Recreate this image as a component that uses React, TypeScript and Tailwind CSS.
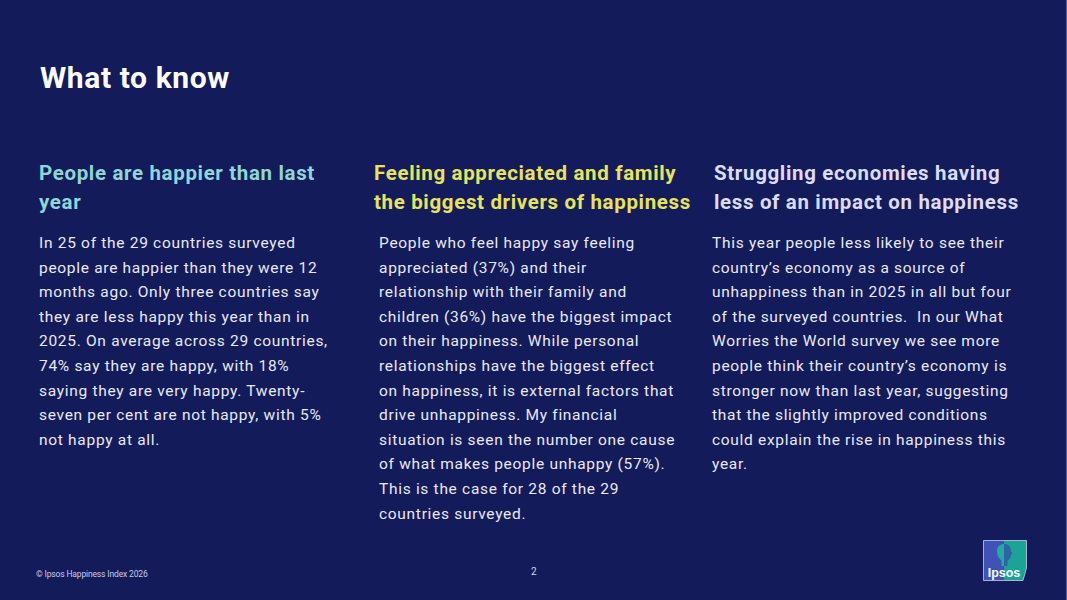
const columns = [
  {
    title: ["People are happier than last", "year"],
    color: "text-[#8fd6d6]",
    wrap: "w-[335px]",
    body: "",
    lines: [
      "In 25 of the 29 countries surveyed",
      "people are happier than they were 12",
      "months ago. Only three countries say",
      "they are less happy this year than in",
      "2025. On average across 29 countries,",
      "74% say they are happy, with 18%",
      "saying they are very happy. Twenty-",
      "seven per cent are not happy, with 5%",
      "not happy at all.",
    ],
  },
  {
    title: ["Feeling appreciated and family", "the biggest drivers of happiness"],
    color: "text-[#e8e35c]",
    wrap: "w-[340px]",
    body: "pl-[5px]",
    lines: [
      "People who feel happy say feeling",
      "appreciated (37%) and their",
      "relationship with their family and",
      "children (36%) have the biggest impact",
      "on their happiness. While personal",
      "relationships have the biggest effect",
      "on happiness, it is external factors that",
      "drive unhappiness. My financial",
      "situation is seen the number one cause",
      "of what makes people unhappy (57%).",
      "This is the case for 28 of the 29",
      "countries surveyed.",
    ],
  },
  {
    title: ["Struggling economies having", "less of an impact on happiness"],
    color: "text-[#dcdcf6]",
    wrap: "flex-1",
    body: "-ml-[2px]",
    lines: [
      "This year people less likely to see their",
      "country’s economy as a source of",
      "unhappiness than in 2025 in all but four",
      "of the surveyed countries.\u00a0 In our What",
      "Worries the World survey we see more",
      "people think their country’s economy is",
      "stronger now than last year, suggesting",
      "that the slightly improved conditions",
      "could explain the rise in happiness this",
      "year.",
    ],
  },
];

const IpsosLogo = () => (
  <svg width="44" height="41" viewBox="0 0 44 41">
    <defs>
      <clipPath id="box">
        <path d="M0.5 0.5 H43.5 V28 L40 40.5 H0.5 Z" />
      </clipPath>
    </defs>
    <g clipPath="url(#box)">
      <rect x="0" y="0" width="21" height="41" fill="#3f52b5" />
      <rect x="21" y="0" width="23" height="41" fill="#1ba396" />
      {/* head silhouette, left part */}
      <path
        d="M21 4 C16 4 13.5 8 14 12.5 C14.5 16.5 16.5 19 18.5 20.5 L18.5 26 L21 26 Z"
        fill="#24ab9f"
      />
      {/* head silhouette, right part */}
      <path
        d="M21 4 C25.5 4 28 7 28 11 L29.5 13.5 L28 14.5 C28 17.5 26.5 19.5 24.5 20.5 L24.5 26 L21 26 Z"
        fill="#2f62a6"
      />
    </g>
    <path
      d="M0.5 0.5 H43.5 V28 L40 40.5 H0.5 Z"
      fill="none"
      stroke="#c9cde8"
      strokeWidth="0.8"
    />
    <text
      x="21"
      y="37"
      textAnchor="middle"
      fill="#ffffff"
      fontFamily="'Liberation Sans', Arial, sans-serif"
      fontWeight="700"
      fontSize="12.5"
    >
      Ipsos
    </text>
  </svg>
);

export default function App() {
  return (
    <div
      className="w-[1067px] h-[600px] overflow-hidden bg-[#131b5b] text-white flex flex-col border-r border-[#5a62a0]"
      style={{ fontFamily: "Roboto, 'Noto Sans', sans-serif" }}
    >
      <h1 className="pl-[40px] pt-[60px] text-[30px] leading-[36px] font-bold tracking-[0.6px]">
        What to know
      </h1>

      {/* Three columns */}
      <div className="mt-[63px] flex pl-[39px]">
        {columns.map((c, i) => (
          <div key={i} className={`${c.wrap} shrink-0 flex flex-col`}>
            <h2
              className={`${c.color} text-[20.5px] leading-[29px] font-bold tracking-[0.65px] whitespace-nowrap`}
            >
              {c.title.map((t, j) => (
                <span key={j} className="block">
                  {t}
                </span>
              ))}
            </h2>
            <p
              className={`${c.body} mt-[14px] text-[15.5px] leading-[24.6px] text-[#e9e9f3] tracking-[0.7px] whitespace-nowrap`}
            >
              {c.lines.map((l, j) => (
                <span key={j} className="block">
                  {l}
                </span>
              ))}
            </p>
          </div>
        ))}
      </div>

      {/* Footer */}
      <div className="mt-auto flex items-end pl-[36px] pr-[39px] pb-[19px]">
        <span className="w-[495px] text-[8.5px] leading-[8px] tracking-[-0.15px] text-[#c9cbe6] pb-[3px]">
          © Ipsos Happiness Index 2026
        </span>
        <span className="text-[10px] leading-[10px] text-[#d8d9ee] pb-[4px]">2</span>
        <span className="ml-auto">
          <IpsosLogo />
        </span>
      </div>
    </div>
  );
}
